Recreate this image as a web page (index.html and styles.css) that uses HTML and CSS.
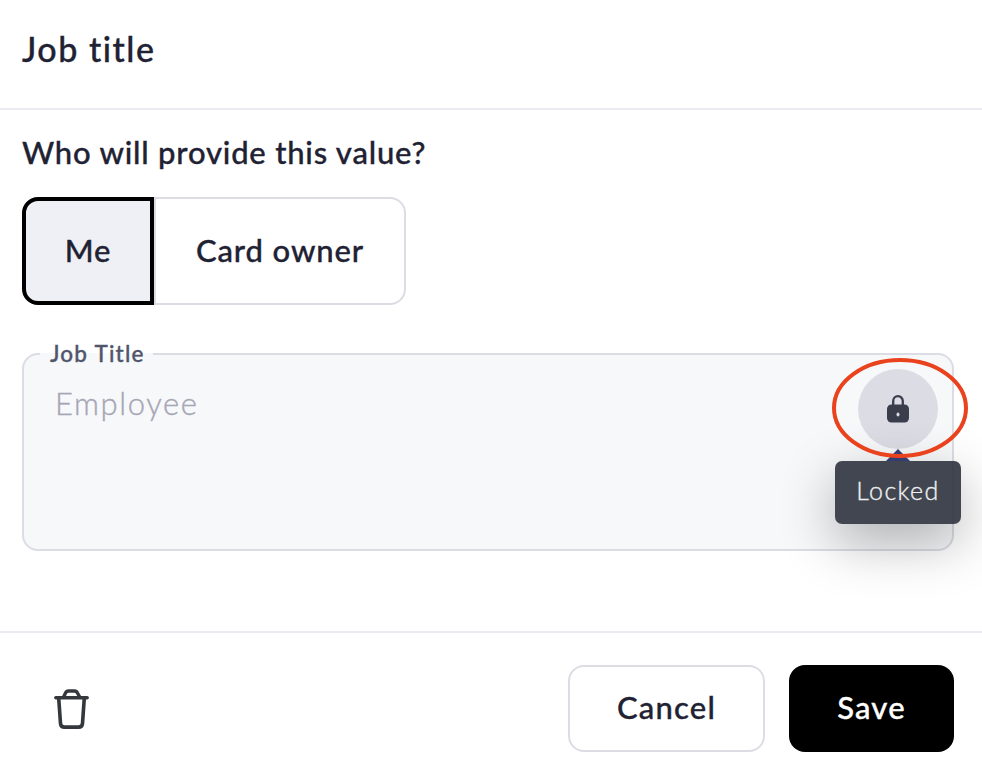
FILE: index.html
```html
<!DOCTYPE html>
<html lang="en">
<head>
  <meta charset="UTF-8">
  <meta name="viewport" content="width=device-width, initial-scale=1.0">
  <title>Job title</title>
  <link rel="stylesheet" href="styles.css">
</head>
<body>
  <div class="modal">
    <header class="modal-header">
      <h1>Job title</h1>
    </header>

    <main class="modal-body">
      <h2>Who will provide this value?</h2>
      <div class="toggle">
        <button type="button" class="toggle-btn active">Me</button>
        <button type="button" class="toggle-btn last">Card owner</button>
      </div>

      <fieldset class="field">
        <legend>Job Title</legend>
        <div class="field-row">
          <span class="value">Employee</span>
          <div class="lock">
            <svg class="lock-icon" width="22" height="28" viewBox="0 0 22 28">
              <path d="M6.2 11V6a4.8 4.8 0 0 1 9.6 0V11" fill="none" stroke="#3a3d4c" stroke-width="2.3"/>
              <rect x="0" y="9.5" width="22" height="18" rx="4.5" fill="#3a3d4c"/>
              <ellipse cx="11" cy="19.5" rx="1.5" ry="2" fill="#dcdce4"/>
            </svg>
            <div class="tooltip">Locked</div>
            <svg class="ring" width="136" height="100" viewBox="0 0 136 100">
              <ellipse cx="68" cy="50" rx="66" ry="48" fill="none" stroke="#e9421d" stroke-width="4"/>
            </svg>
          </div>
        </div>
      </fieldset>
    </main>

    <footer class="modal-footer">
      <button type="button" class="delete" aria-label="Delete">
        <svg width="36" height="42" viewBox="0 0 36 42" fill="none" stroke="#34383c">
          <path d="M1.8 9.7H33.2" stroke-width="3.4" stroke-linecap="round"/>
          <path d="M9.6 9L11.5 5Q12.4 3 14.5 3H20.5Q22.6 3 23.5 5L25.7 9" stroke-width="3.4"/>
          <path d="M4.7 10L6.5 35.5Q6.8 39.1 10.5 39.1H24.5Q28.2 39.1 28.5 35.5L30.3 10" stroke-width="3.6"/>
        </svg>
      </button>
      <button type="button" class="btn btn-cancel">Cancel</button>
      <button type="button" class="btn btn-save">Save</button>
    </footer>
  </div>
</body>
</html>
```
FILE: styles.css
```css
* {
  box-sizing: border-box;
}
body {
  margin: 0;
  background: #fff;
  color: #1f2233;
  font-family: Lato, "Liberation Sans", sans-serif;
  font-weight: 500;
  -webkit-text-stroke: 0.35px;
}
.modal {
  display: flex;
  flex-direction: column;
  height: 768px;
  overflow: hidden;
}
.modal-header {
  height: 110px;
  padding: 29px 22px 0;
  border-bottom: 2px solid #ebebf2;
}
h1 {
  margin: 0;
  font-size: 34px;
  line-height: 40px;
  font-weight: 500;
  letter-spacing: 1.5px;
}
.modal-body {
  flex: 1;
  padding: 22px 28px 0 22px;
}
h2 {
  margin: 0 0 25px;
  font-size: 31px;
  line-height: 40px;
  font-weight: 500;
  letter-spacing: 0.8px;
}
button {
  padding: 0;
  background: #fff;
  border: 0;
  color: inherit;
  font: inherit;
  -webkit-text-stroke: inherit;
  cursor: pointer;
}
.toggle {
  display: flex;
}
.toggle-btn {
  width: 132px;
  height: 108px;
  padding-bottom: 2px;
  font-size: 31px;
  letter-spacing: 0.9px;
}
.toggle-btn.active {
  background: #eff0f5;
  border: 4px solid #000;
  border-radius: 16px 0 0 16px;
}
.toggle-btn.last {
  width: 252px;
  border: 2px solid #dcdce4;
  border-radius: 0 16px 16px 0;
}
.field {
  height: 210px;
  margin: 36px 0 0;
  padding: 0;
  background: #f7f8fa;
  border: 2px solid #dcdce4;
  border-radius: 16px;
}
legend {
  height: 26px;
  margin-left: 16px;
  padding: 0 8px 0 10px;
  color: #50556a;
  font-size: 22.5px;
  line-height: 26px;
  letter-spacing: 1.2px;
}
.field-row {
  display: flex;
  justify-content: space-between;
  padding: 2px 14px 0 31px;
}
.value {
  padding-top: 14px;
  color: #a5a6b4;
  font-size: 31px;
  line-height: 40px;
  font-weight: 300;
  letter-spacing: 1.6px;
}
.lock {
  position: relative;
  display: flex;
  align-items: center;
  justify-content: center;
  width: 80px;
  height: 80px;
  border-radius: 50%;
  background: #dcdce4;
}
.tooltip {
  position: absolute;
  top: 92px;
  left: -23px;
  width: 126px;
  height: 63px;
  border-radius: 7px;
  background: rgba(46, 50, 62, 0.9);
  box-shadow: 0 18px 54px rgba(0, 0, 0, 0.3);
  color: #eeeff0;
  font-size: 25px;
  line-height: 59px;
  font-weight: 300;
  letter-spacing: 1.4px;
  text-align: center;
}
.tooltip::before {
  content: "";
  position: absolute;
  top: -12px;
  left: 51px;
  border: 12px solid transparent;
  border-top: 0;
  border-bottom-color: #333c73;
}
.ring {
  position: absolute;
  top: -11px;
  left: -26px;
}
.modal-footer {
  display: flex;
  align-items: center;
  height: 137px;
  padding: 16px 28px 0 54px;
  border-top: 2px solid #ebebf2;
}
.delete {
  display: flex;
  margin-right: auto;
}
.btn {
  height: 87px;
  padding-bottom: 4px;
  border-radius: 16px;
  font-size: 31px;
  letter-spacing: 1.2px;
}
.btn-cancel {
  width: 197px;
  margin-right: 24px;
  border: 2px solid #dcdce4;
}
.btn-save {
  width: 165px;
  background: #000;
  color: #fff;
}
```
